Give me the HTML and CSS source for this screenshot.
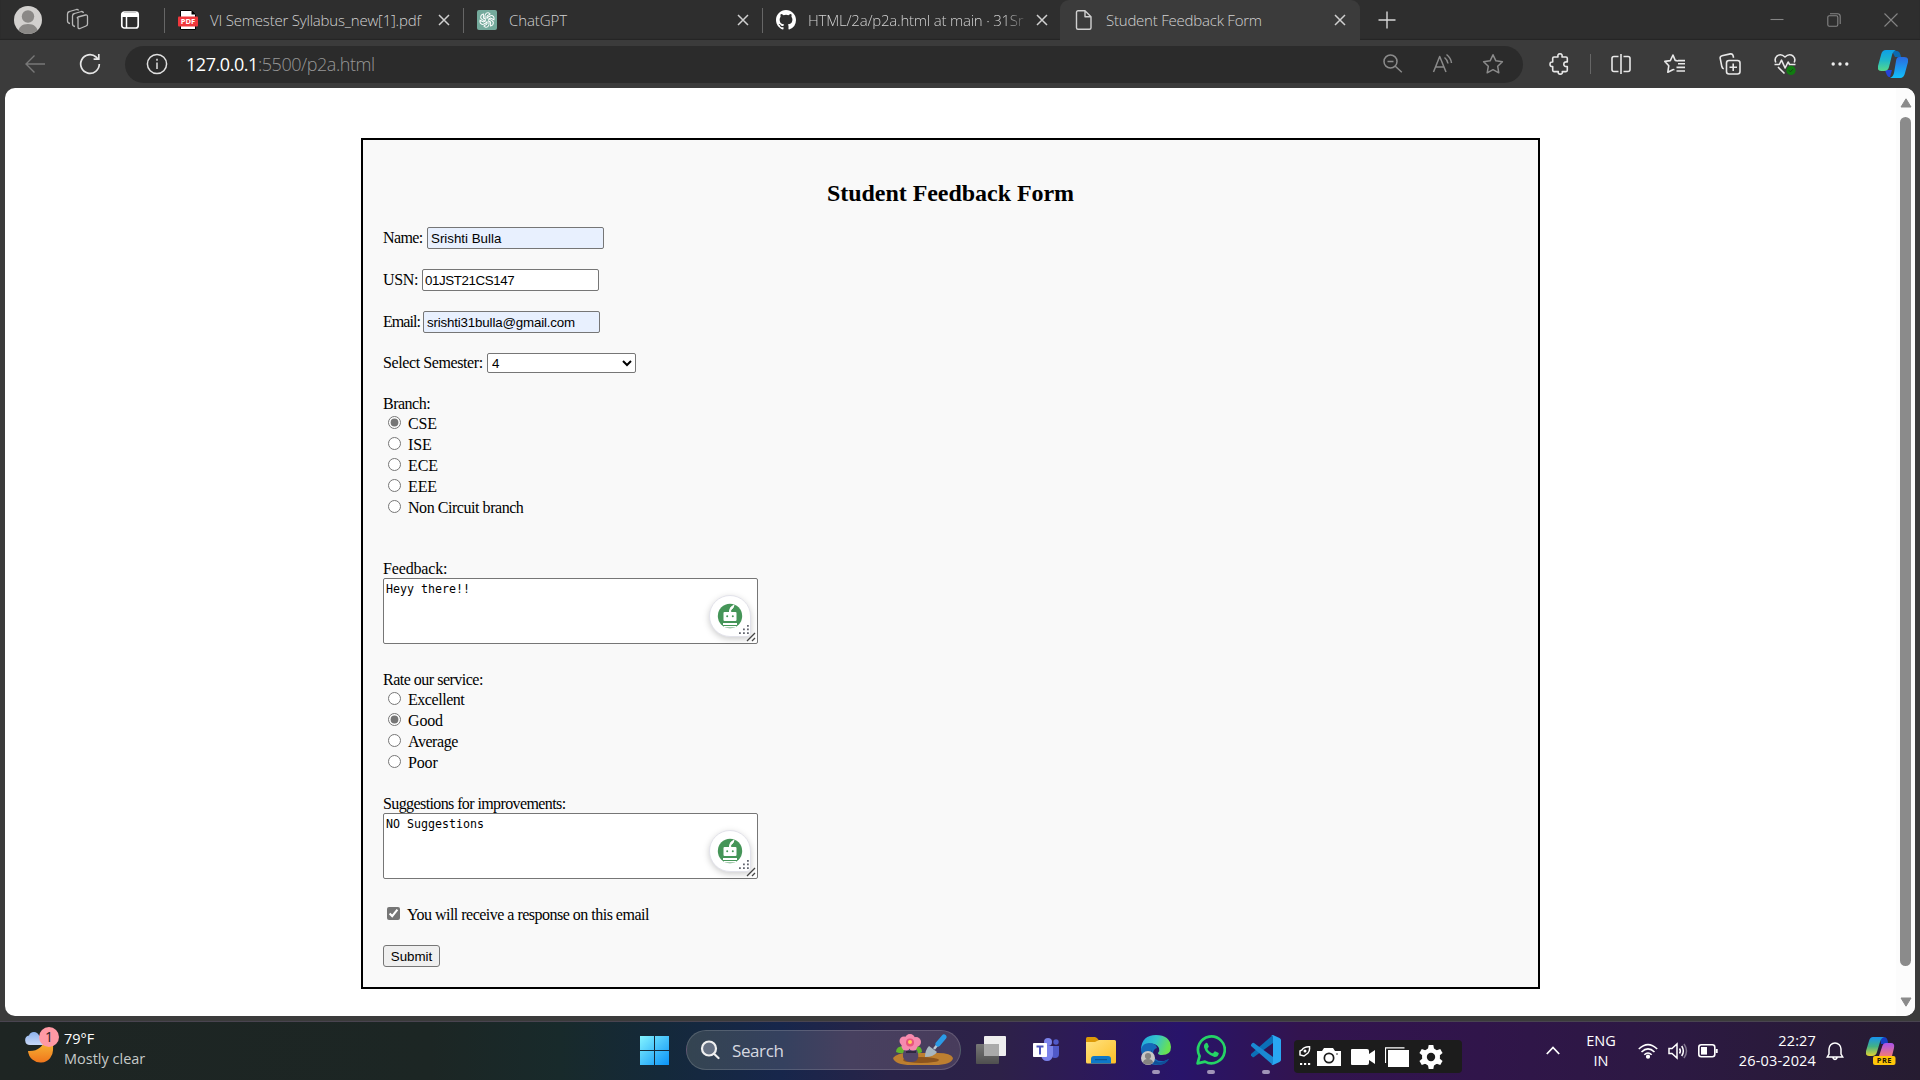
FILE: index.html
```html
<!DOCTYPE html>
<html lang="en">
<head>
<meta charset="utf-8">
<title>Student Feedback Form</title>
<link rel="stylesheet" href="styles.css">
</head>
<body>
<header class="tabbar">
  <div class="tab-tools">
    <svg class="avatar" width="28" height="28" viewBox="0 0 28 28"><defs><clipPath id="av"><circle cx="14" cy="14" r="14"/></clipPath></defs><g clip-path="url(#av)"><rect width="28" height="28" fill="#d2d0ce"/><circle cx="14" cy="10.500" r="6.200" fill="#8a8886"/><path d="M4 28c0-7 4-10 10-10s10 3 10 10z" fill="#8a8886"/></g></svg>
    <svg class="workspaces" width="24" height="24" viewBox="0 0 24 24" fill="none" stroke="#b8b8b8" stroke-width="1.300" stroke-linejoin="round"><path d="M12 9l7.500-2q2-.4 2 1.500v7.500q0 1.500-1.500 2l-6 2.500q-2 .5-2-1.500V10.500Q10.500 9.500 12 9z"/><path d="M9 18.500q-2.500-.5-2.500-2.500V8q0-2 2-2.500l7-2Q17 3.300 17.500 5"/><path d="M4 15.500q-2.500-.5-2.500-2.500V6q0-2 2-2.500l7-2Q12 1.300 12.500 2.500"/></svg>
    <svg class="vertical" width="20" height="20" viewBox="0 0 20 20"><rect x="1.800" y="2" width="16.400" height="16" rx="2.500" fill="none" stroke="#fff" stroke-width="1.700"/><path d="M2 3h16v4H2z" fill="#fff"/><path d="M6.500 6v12" stroke="#fff" stroke-width="1.500"/></svg>
  </div>
  <div class="tab tab-pdf">
    <svg class="favicon" width="20" height="20" viewBox="0 0 20 20"><path d="M2.500.5h11l4 4v15h-15z" fill="#fff" stroke="#000"/><path d="M13.500.5v4h4z" fill="#000"/><rect y="6.500" width="20" height="10" rx="1" fill="#f0373c"/><text x="10" y="14.200" text-anchor="middle" class="pdf-label">PDF</text></svg>
    <span class="tab-title w-pdf">VI Semester Syllabus_new[1].pdf</span>
    <svg class="close" width="12" height="12" viewBox="0 0 12 12"><path d="M1 1l10 10M11 1L1 11"/></svg>
  </div>
  <div class="tab tab-gpt">
    <svg class="favicon" width="20" height="20" viewBox="0 0 20 20"><rect width="20" height="20" rx="2" fill="#74aa9c"/><g fill="none" stroke="#fff" stroke-width="1"><g id="petal"><path d="M8 8.900V5.400Q8.200 3 10.600 2.700q1.500 0 2.700 1.200L10 5.900v3"/></g><use href="#petal" transform="rotate(60 10 10)"/><use href="#petal" transform="rotate(120 10 10)"/><use href="#petal" transform="rotate(180 10 10)"/><use href="#petal" transform="rotate(240 10 10)"/><use href="#petal" transform="rotate(300 10 10)"/></g></svg>
    <span class="tab-title w-gpt">ChatGPT</span>
    <svg class="close" width="12" height="12" viewBox="0 0 12 12"><path d="M1 1l10 10M11 1L1 11"/></svg>
  </div>
  <div class="tab tab-git">
    <svg class="favicon" width="20" height="20" viewBox="0 0 16 16"><path fill="#fff" d="M8 0C3.580 0 0 3.580 0 8c0 3.540 2.290 6.530 5.470 7.590.4.070.55-.17.55-.38 0-.19-.01-.82-.01-1.490-2.010.37-2.530-.49-2.690-.94-.09-.23-.48-.94-.82-1.130-.28-.15-.68-.52-.01-.53.63-.01 1.080.58 1.230.82.72 1.210 1.870.87 2.330.66.07-.52.28-.87.51-1.070-1.780-.2-3.640-.89-3.640-3.950 0-.87.31-1.590.82-2.150-.08-.2-.36-1.020.08-2.120 0 0 .67-.21 2.200.82a7.600 7.600 0 0 1 4 0c1.530-1.040 2.200-.82 2.200-.82.44 1.100.16 1.920.08 2.120.51.56.82 1.270.82 2.150 0 3.070-1.870 3.750-3.650 3.950.29.25.54.73.54 1.480 0 1.070-.01 1.930-.01 2.200 0 .21.15.46.55.38A8 8 0 0 0 16 8c0-4.420-3.580-8-8-8z"/></svg>
    <span class="tab-title w-git">HTML/2a/p2a.html at main · 31Sr</span>
    <svg class="close" width="12" height="12" viewBox="0 0 12 12"><path d="M1 1l10 10M11 1L1 11"/></svg>
  </div>
  <div class="tab tab-active">
    <svg class="favicon" width="20" height="20" viewBox="0 0 20 20" fill="none" stroke="#d0d0d0" stroke-width="1.400" stroke-linejoin="round"><path d="M4 .8h7l6 6v11a1.500 1.500 0 0 1-1.500 1.500H4A1.500 1.500 0 0 1 2.500 17.800V2.300A1.500 1.500 0 0 1 4 .8zM11 .8v6h6"/></svg>
    <span class="tab-title w-form">Student Feedback Form</span>
    <svg class="close" width="12" height="12" viewBox="0 0 12 12"><path d="M1 1l10 10M11 1L1 11"/></svg>
  </div>
  <svg class="newtab" width="18" height="18" viewBox="0 0 18 18"><path d="M9 0.500v17M.5 9h17"/></svg>
  <div class="window-controls">
    <svg width="14" height="14" viewBox="0 0 14 14"><path d="M.5 6.500h13"/></svg>
    <svg width="14" height="14" viewBox="0 0 14 14"><rect x=".8" y="2.800" width="10" height="10.500" rx="1.500"/><path d="M3 .8h7.500q2.700 0 2.700 2.700V11"/></svg>
    <svg width="14" height="14" viewBox="0 0 14 14"><path d="M.5.5l13 13M13.500.5l-13 13"/></svg>
  </div>
</header>

<nav class="toolbar">
  <svg class="back" width="22" height="20" viewBox="0 0 22 20" fill="none" stroke="#787878" stroke-width="1.400"><path d="M21 10H2M10.500 1.500L2 10l8.500 8.500"/></svg>
  <svg class="reload" width="22" height="22" viewBox="0 0 22 22" fill="none" stroke="#e6e6e6" stroke-width="1.700"><path d="M20.300 11a9.300 9.300 0 1 1-3.200-7l2 2M19.800 1v5.200h-5.200"/></svg>
  <div class="address">
    <svg width="22" height="22" viewBox="0 0 22 22" fill="none" stroke="#e0e0e0" stroke-width="1.500"><circle cx="11" cy="11" r="9.600"/><path d="M11 9.500v6.500M11 5.800v2"/></svg>
    <span class="url"><b>127.0.0.1</b>:5500/p2a.html</span>
    <div class="address-icons">
      <svg width="22" height="22" viewBox="0 0 22 22"><circle cx="8.500" cy="8.500" r="6.500"/><path d="M13.300 13.300l6.500 6M5.500 8.500h6"/></svg>
      <svg width="22" height="22" viewBox="0 0 22 22"><path d="M1.500 19L7.700 3.500 14 19M3.700 14h8.200M12.500 4.500q3 2.300 3.500 6M14.500 1.500q4.500 3.500 5 8.500"/></svg>
      <svg width="22" height="22" viewBox="0 0 22 22"><path d="M11 1.800l2.900 6 6.500.9-4.700 4.600 1.100 6.500L11 16.700l-5.800 3.100 1.100-6.500L1.600 8.700l6.500-.9z"/></svg>
    </div>
  </div>
  <div class="actions">
    <svg width="22" height="22" viewBox="0 0 22 22"><path d="M5 4h4q-.7-3.200 2-3.200T13 4h4q1.300 0 1.300 1.300V9q-3.500-.6-3.500 2.200T18.300 13.500v3.800q0 1.300-1.300 1.300h-3.700q.5 2.500-2 2.500t-2-2.500H5q-1.300 0-1.300-1.300V13.500q-2.700.3-2.700-2.300T3.700 9V5.300Q3.700 4 5 4z"/></svg>
    <i class="action-divider"></i>
    <svg width="22" height="22" viewBox="0 0 22 22"><path d="M11 1v20M8.500 3.500H4q-2 0-2 2v11q0 2 2 2h4.500M13.500 3.500H18q2 0 2 2v11q0 2-2 2h-4.500"/></svg>
    <svg width="22" height="22" viewBox="0 0 22 22"><path d="M14 8l-2.800-.6L9 2 6.300 7.600l-5.500.8 4 4.300-1 6.500 5-2.400q1.200-.5 1.200.4M14 10.800h7M12.500 14.400H21M12.500 18H21M14 7.600h7"/></svg>
    <svg width="22" height="22" viewBox="0 0 22 22"><rect x="7.500" y="7.500" width="13.500" height="13.500" rx="2.500"/><path d="M14.200 10.500v7.500M10.500 14.200H18M4.800 15.800q-1.500-.3-1.900-2L1.200 5.300Q.8 3.200 3 2.700l8.300-1.800q2-.4 2.700 1.500l.6 2.300"/></svg>
    <svg width="22" height="22" viewBox="0 0 22 22"><path d="M1.800 9.500Q0 5.500 3 3q4-3 8 1 4-4 8-1 3 2.500 1.200 6.500M.5 11.500h4.800l2.200-4.300 3.600 7.800 3-6 1.500 2.500H21.500M4 14l6.500 6.500"/><circle cx="17" cy="17.400" r="4.600" fill="#107c10" stroke="none"/><path d="M15 17.400l1.400 1.400 2.600-2.600" stroke="#173d17" stroke-width="1"/></svg>
    <svg width="22" height="22" viewBox="0 0 22 22"><g fill="#eee" stroke="none"><circle cx="4.200" cy="11" r="1.700"/><circle cx="11" cy="11" r="1.700"/><circle cx="17.800" cy="11" r="1.700"/></g></svg>
  </div>
  <svg class="copilot" width="30" height="28" viewBox="0 0 30 28"><defs><linearGradient id="cp1" x2="0" y2="1"><stop stop-color="#0da0e8"/><stop offset=".5" stop-color="#20b8c8"/><stop offset="1" stop-color="#56d98a"/></linearGradient><linearGradient id="cp2" x2="0" y2="1"><stop stop-color="#2a6ae0"/><stop offset="1" stop-color="#12c0fa"/></linearGradient></defs><path d="M14 1h5q3 0 4 6h-6z" fill="#0b6ab0"/><path d="M7 20h7l-2 7H11q-2 0-4-7z" fill="#2545d8"/><path d="M8 0h10q-3 1-4 5l-3 12q-1 4-5 4H3q-4 0-3-5L3 5q1-5 5-5z" fill="url(#cp1)"/><path d="M21 7h5q5 0 4 5l-3 11q-1 5-5 5H12q3-1 4-5l2-12q.5-4 3-4z" fill="url(#cp2)"/></svg>
</nav>

<main class="viewport">
  <div class="page">
    <form class="feedback">
      <h2>Student Feedback Form</h2>
      <label class="row"><span class="label name">Name:</span><input class="field filled" type="text" value="Srishti Bulla"></label>
      <label class="row"><span class="label usn">USN:</span><input class="field usn-field" type="text" value="01JST21CS147"></label>
      <label class="row"><span class="label email">Email:</span><input class="field filled email-field" type="text" value="srishti31bulla@gmail.com"></label>
      <label class="row semester"><span class="label sem">Select Semester:</span><select class="select"><option>4</option></select></label>
      <div class="group branch">
        <span class="caption">Branch:</span>
        <label class="choice code"><input type="radio" name="branch" checked>CSE</label>
        <label class="choice code"><input type="radio" name="branch">ISE</label>
        <label class="choice code"><input type="radio" name="branch">ECE</label>
        <label class="choice code"><input type="radio" name="branch">EEE</label>
        <label class="choice"><input type="radio" name="branch">Non Circuit branch</label>
      </div>
      <div class="group comments">
        <span class="caption wide">Feedback:</span>
        <div class="area"><textarea spellcheck="false">Heyy there!!</textarea>
          <svg class="helper" width="50" height="50" viewBox="0 0 50 50"><defs><g id="bot"><path d="M25 4.500A20.500 20.500 0 1 0 25 45.500H42q3.500 0 3.500-3.500V25A20.500 20.500 0 0 0 25 4.500z" fill="#fff" stroke="#e2e2ea"/><circle cx="25" cy="25" r="12.200" fill="#459558"/><path d="M24.500 20q0-4 4.500-6-.5 3.500-3.300 5V21h-1.200z" fill="#fff" stroke="#fff"/><rect x="18.500" y="21" width="13" height="9" rx="1" fill="#fff"/><circle cx="22.200" cy="25.300" r="1" fill="#459558"/><circle cx="27.800" cy="25.300" r="1" fill="#459558"/><path d="M18 32h14v2H18zM19 35h12v1.500H19z" fill="#fff"/><g fill="#62656f"><path d="M42 34h1.800v1.800H42zM38 37.500h1.800v1.800H38zM42 37.500h1.800v1.800H42zM34 41.300h1.800v1.800H34zM38 41.300h1.800v1.800H38zM42 41.300h1.800v1.800H42z"/></g></g></defs><use href="#bot"/></svg>
          <svg class="grip" width="10" height="10" viewBox="0 0 10 10"><path d="M1 9L9 1M6 9L9 6"/></svg>
        </div>
      </div>
      <div class="group rating">
        <span class="caption">Rate our service:</span>
        <label class="choice"><input type="radio" name="rate">Excellent</label>
        <label class="choice wide"><input type="radio" name="rate" checked>Good</label>
        <label class="choice"><input type="radio" name="rate">Average</label>
        <label class="choice wide"><input type="radio" name="rate">Poor</label>
      </div>
      <div class="group suggestions">
        <span class="caption">Suggestions for improvements:</span>
        <div class="area"><textarea spellcheck="false">NO Suggestions</textarea>
          <svg class="helper" width="50" height="50" viewBox="0 0 50 50"><use href="#bot"/></svg>
          <svg class="grip" width="10" height="10" viewBox="0 0 10 10"><path d="M1 9L9 1M6 9L9 6"/></svg>
        </div>
      </div>
      <label class="choice consent"><input type="checkbox" checked>You will receive a response on this email</label>
      <button class="submit" type="button">Submit</button>
    </form>
  </div>
  <div class="scrollbar">
    <svg width="12" height="10" viewBox="0 0 12 10"><path d="M6 .8L11 9H1z" fill="#8b8b8b" stroke="#8b8b8b" stroke-linejoin="round"/></svg>
    <i class="thumb"></i>
    <svg width="12" height="10" viewBox="0 0 12 10"><path d="M6 9.200L11 1H1z" fill="#8b8b8b" stroke="#8b8b8b" stroke-linejoin="round"/></svg>
  </div>
</main>

<footer class="taskbar">
  <div class="weather">
    <svg width="36" height="36" viewBox="0 0 36 36"><defs><linearGradient id="moon" x2="0" y2="1"><stop stop-color="#f7c63c"/><stop offset="1" stop-color="#f0761c"/></linearGradient><linearGradient id="cloud" x2="0" y2="1"><stop stop-color="#8db2ec"/><stop offset="1" stop-color="#c9d9f7"/></linearGradient></defs><path d="M21 10q8 3 7 12a12.500 12.500 0 0 1-25 2q14 1 18-14z" fill="url(#moon)"/><path d="M5 18a4.800 4.800 0 0 1-1-9.500Q5 5 9 5q3.500 0 5 3.500 4 1 4 9.500z" fill="url(#cloud)"/><circle cx="24" cy="10" r="10" fill="#ff99a4"/><text x="24" y="15.300" text-anchor="middle" class="badge-text">1</text></svg>
    <div class="weather-text"><span>79°F</span><small>Mostly clear</small></div>
  </div>
  <div class="apps">
    <svg width="29" height="29" viewBox="0 0 29 29"><defs><linearGradient id="win" gradientUnits="userSpaceOnUse" x1="0" y1="0" x2="29" y2="29"><stop stop-color="#83f4ff"/><stop offset=".55" stop-color="#40bdfa"/><stop offset="1" stop-color="#0a93f7"/></linearGradient></defs><path d="M0 0h14v14H0zM15 0h14v14H15zM0 15h14v14H0zM15 15h14v14H15z" fill="url(#win)"/></svg>
    <div class="search">
      <svg width="20" height="20" viewBox="0 0 20 20" fill="none" stroke="#f0f0f0" stroke-width="2.200" stroke-linecap="round"><circle cx="9" cy="8.500" r="7" fill="#667183"/><path d="M14 13.700l4.500 4.300"/></svg>
      <span>Search</span>
      <svg class="flower" width="60" height="32" viewBox="0 0 60 32"><path d="M0 24q4-5 15-5h30q13 0 15 5-1 7-19 7H18Q2 31 0 24z" fill="#bd7f30"/><ellipse cx="28" cy="26" rx="18" ry="3" fill="#8b541e"/><path d="M11 12q-8 0-8 6 7 3 11-1zM23 12q6 0 6 6-5 3-8-1z" fill="#62b52d"/><path d="M11 16h13q3 8-1 11-5 2-10 0-5-3-2-11z" fill="#514568"/><path d="M13 17h10v2H13z" fill="#2e2840"/><g fill="#f68aae"><circle cx="17" cy="5" r="5"/><circle cx="23" cy="8" r="5"/><circle cx="20" cy="12" r="4.500"/><circle cx="13" cy="12" r="4.500"/><circle cx="11" cy="7" r="4.500"/></g><circle cx="17" cy="8.500" r="4" fill="#e8547e"/><circle cx="17" cy="8" r="2" fill="#ffcb58"/><path d="M50 4l-9 11" stroke="#b9cad6" stroke-width="2.500"/><path d="M36 12l8 6q-3 5-12 5 0-7 4-11z" fill="#a8b7c0"/><path d="M51 3l-6 7" stroke="#2b9be6" stroke-width="5" stroke-linecap="round"/></svg>
    </div>
    <svg width="30" height="28" viewBox="0 0 30 28"><defs><linearGradient id="tv" x2="0" y2="1"><stop stop-color="#777"/><stop offset="1" stop-color="#4f4f4f"/></linearGradient></defs><rect x="8" width="22" height="20" rx="1" fill="#eee"/><rect y="8" width="23" height="20" rx="1" fill="url(#tv)"/><path d="M8 8h15v12H8z" fill="#aaa"/></svg>
    <svg class="teams" width="28" height="26" viewBox="0 0 28 26"><circle cx="23" cy="5" r="2.700" fill="#5059c9"/><circle cx="15" cy="5" r="4" fill="#7b83eb"/><path d="M18 9h8v8q0 4-4 4t-4-4z" fill="#5059c9"/><path d="M8 9h12v9q-1 6-6 6t-6-6z" fill="#7b83eb"/><rect y="6" width="14" height="14" rx=".8" fill="#fff"/><path d="M3.500 9.500h7M7 9.500v8" stroke="#4b53bc" stroke-width="2"/></svg>
    <svg width="30" height="27" viewBox="0 0 30 27"><defs><linearGradient id="fold" x2="1" y2="1"><stop stop-color="#ffe281"/><stop offset="1" stop-color="#fdbf25"/></linearGradient></defs><path d="M0 1.500Q0 0 1.500 0H9q2 0 4 3.500L9 8H0z" fill="#dd9a08"/><path d="M0 5h9L13 3h15.500Q30 3 30 4.500V25q0 1.500-1.500 1.500h-27Q0 26.500 0 25z" fill="url(#fold)"/><path d="M5 26.500V22q0-3 3-3h14q3 0 3 3v4.500z" fill="#0e78c8"/><path d="M9 22.700h12" stroke="#0b4f8c"/></svg>
    <div class="app running"><svg width="30" height="30" viewBox="0 0 30 30"><defs><linearGradient id="ed" x2="1" y2=".3"><stop stop-color="#1ba3e2"/><stop offset=".55" stop-color="#36c5c9"/><stop offset="1" stop-color="#68e152"/></linearGradient></defs><path d="M0 14Q1 0 15 0t15 12q0 8-9 8-4 0-4-2 2-2 1-5-3-5-9-4-7 1-9 8z" fill="url(#ed)"/><path d="M0 14q2-6 8-6 7 0 8 5-4 1-4 6 1 8 11 7l5-2q-5 7-13 6Q1 29 0 14z" fill="#1569b8"/><path d="M11 15q-2 9 6 12 5 1 11-3-2 5-10 6-9-1-10-8 0-5 3-7z" fill="#104f97"/><circle cx="7" cy="23" r="7" fill="#c9c7c5"/><circle cx="7" cy="21" r="3.100" fill="#858381"/><path d="M2 28q0-4 5-4t5 4q-5 3.500-10 0z" fill="#858381"/></svg></div>
    <div class="app running"><svg width="30" height="30" viewBox="0 0 30 30"><path d="M1.600 28.400l2-7.200A13.400 13.400 0 1 1 9 26.600z" fill="none" stroke="#25d366" stroke-width="2.700" stroke-linejoin="round"/><path d="M10.500 7.800q-3 1.200-2.500 4.500Q10 19.500 18.500 22q3.500.2 4.300-3.500 0-.8-3.800-2.300-.6 0-1.900 2-.8.500-3.100-1.200-2-1.600-2.600-3.100 0-.5 1.400-2.200 0-.5-1.300-3.400-.4-.7-1-.5z" fill="#25d366"/></svg></div>
    <div class="app running"><svg width="30" height="30" viewBox="0 0 30 30"><path d="M22 8L3 22q-1 .5-1.500 0L0 20.500q-.5-1 0-1.500L22 0z" fill="#0b70b8"/><path d="M22 22L3 8q-1-.5-1.500 0L0 9.500q-.5 1 0 1.500L22 30z" fill="#1a8ad2"/><path d="M22 0l6.500 3Q30 4 30 5v20q0 1-1.500 2L22 30q-1 0-2-1 2 1 2-1V2q0-2-2-1 1-1 2-1z" fill="#29a7f2"/></svg></div>
    <div class="recorder">
      <svg width="12" height="22" viewBox="0 0 12 22"><path d="M10.500.8Q5 .5 3 4L1 5v4l4 1 4-3q2-2 1.500-6z" fill="#1c1c1c" stroke="#fff" stroke-width="1.500"/><circle cx="6" cy="5" r="1.500" fill="#fff"/><path d="M1 17h2.200v2H1zM5 17h2.200v2H5zM9 17h2.200v2H9z" fill="#fff"/></svg>
      <svg width="24" height="20" viewBox="0 0 24 20"><path d="M0 4h5l2-3h9l2 3h6v15H0z" fill="#fff"/><circle cx="12" cy="11" r="5.500" fill="#1c1c1c"/><circle cx="12" cy="11" r="3.800" fill="#fff"/><circle cx="20" cy="7" r=".8" fill="#1c1c1c"/></svg>
      <svg width="24" height="20" viewBox="0 0 24 20"><path d="M1 2h15q2 0 2 2v3l6-4v14l-6-4v3q0 2-2 2H1q-1 0-1-1V3q0-1 1-1z" fill="#fff"/></svg>
      <svg width="24" height="20" viewBox="0 0 24 20"><path d="M.5 16V.8h19" fill="none" stroke="#fff" stroke-width="1.200"/><path d="M3 3h21v17H3z" fill="#fff"/></svg>
      <svg width="24" height="24" viewBox="0 0 24 24"><g fill="#fff"><circle cx="12" cy="12" r="9"/><path id="tooth" d="M9.700 0h4.600l1 5H8.700z"/><use href="#tooth" transform="rotate(60 12 12)"/><use href="#tooth" transform="rotate(120 12 12)"/><use href="#tooth" transform="rotate(180 12 12)"/><use href="#tooth" transform="rotate(240 12 12)"/><use href="#tooth" transform="rotate(300 12 12)"/></g><circle cx="12" cy="12" r="4.200" fill="#1c1c1c"/></svg>
    </div>
  </div>
  <div class="tray">
    <svg class="chevron" width="14" height="9" viewBox="0 0 14 9"><path d="M.8 8L7 1.500 13.200 8" stroke-width="1.800"/></svg>
    <div class="lang"><span>ENG</span><span>IN</span></div>
    <svg class="wifi" width="20" height="16" viewBox="0 0 20 16" stroke-width="1.600"><path d="M.8 6q9.200-8.800 18.400 0M3.500 9q6.500-6.300 13 0M6.300 11.800q3.700-3.600 7.400 0"/><circle cx="10" cy="13.700" r="1.300" fill="#fff"/></svg>
    <svg class="sound" width="20" height="18" viewBox="0 0 20 18" stroke-width="1.500"><path d="M1 6.500h3l5-4.500v14l-5-4.500H1zM11.500 6.500q1.700 2.500 0 5M13.700 4q3.300 5 0 10"/><path d="M16 2q5 7 0 14" opacity=".4"/></svg>
    <svg class="battery" width="20" height="14" viewBox="0 0 20 14" stroke-width="1.600"><rect x=".8" y=".8" width="16" height="12" rx="2.500"/><path d="M3 3h6v7.600H3z" fill="#fff" stroke="none"/><path d="M18.700 5v4" stroke-width="2"/></svg>
    <div class="clock"><span>22:27</span><span>26-03-2024</span></div>
    <svg class="bell" width="18" height="20" viewBox="0 0 18 20" stroke-width="1.500"><path d="M3 13V8a6 6 0 0 1 12 0v5l1.700 3H1.300zM6.800 16.500q2.200 3.800 4.400 0"/></svg>
    <svg class="copilot-pre" width="30" height="28" viewBox="0 0 30 28"><defs><linearGradient id="pr1" x2="0" y2="1"><stop stop-color="#1793ee"/><stop offset=".5" stop-color="#43b184"/><stop offset="1" stop-color="#e3d332"/></linearGradient><linearGradient id="pr2" x2="0" y2="1"><stop stop-color="#a952ed"/><stop offset="1" stop-color="#f27a78"/></linearGradient></defs><path d="M14 0h4q4 0 4 7h-7z" fill="#173fc4"/><path d="M7 0h11q-3 1-4 5l-3 10q-1 4-5 4H3q-4 0-3-5L3 4q1-4 4-4z" fill="url(#pr1)" stroke="none"/><path d="M20 6h5q4 0 3 5l-2 8H13l3-9q1-4 4-4z" fill="url(#pr2)" stroke="none"/><rect x="7" y="19" width="22.500" height="9" rx="2" fill="#ffc60a" stroke="none"/><text x="18.300" y="26.300" text-anchor="middle" class="pre-label">PRE</text></svg>
  </div>
</footer>
</body>
</html>
```
FILE: styles.css
```css
* { box-sizing: border-box; }
body {
  margin: 0;
  width: 1920px;
  height: 1080px;
  overflow: hidden;
  display: flex;
  flex-direction: column;
  background: #3b3b3b;
  font-family: "Open Sans", "Noto Sans", sans-serif;
}
svg { display: block; flex: none; }

/* Tabs */
.tabbar {
  flex: none;
  height: 40px;
  display: flex;
  align-items: center;
  background: #2e2e2e;
  box-shadow: inset 0 -1px 1px #252525;
}
.tab-tools { width: 164px; height: 40px; display: flex; align-items: center; padding-left: 14px; }
.workspaces { margin-left: 24px; }
.vertical { margin-left: 30px; }
.tab { height: 40px; display: flex; align-items: center; color: #d2d2d2; }
.tab-pdf::before, .tab-gpt::before, .tab-git::before {
  content: "";
  width: 1px;
  height: 25px;
  background: #666;
  margin-right: 13px;
}
.tab-pdf { width: 299px; }
.tab-gpt { width: 299px; }
.tab-git { width: 298px; }
.tab-title {
  margin-left: 12px;
  font-size: 15px;
  font-weight: 300;
  white-space: nowrap;
  line-height: 22px;
  padding-bottom: 1px;
}
.w-pdf { width: 218px; letter-spacing: -.2px; }
.w-gpt { width: 218px; letter-spacing: -.1px; }
.w-git {
  width: 218px;
  letter-spacing: -.22px;
  -webkit-mask-image: linear-gradient(90deg, #000 90%, rgba(0, 0, 0, .15));
  mask-image: linear-gradient(90deg, #000 90%, rgba(0, 0, 0, .15));
}
.close { margin-left: 10px; fill: none; stroke: #d0d0d0; stroke-width: 1.5; }
.tab-active {
  width: 300px;
  padding-left: 14px;
  background: #3b3b3b;
  border-radius: 9px 9px 0 0;
}
.tab-active .tab-title { width: 218px; letter-spacing: -.22px; }
.newtab { margin-left: 18px; fill: none; stroke: #d8d8d8; stroke-width: 1.4; }
.window-controls { margin-left: auto; margin-right: 22px; display: flex; gap: 43px; }
.window-controls svg { fill: none; stroke: #858585; stroke-width: 1.1; }
.pdf-label { font: bold 7.5px "Open Sans", sans-serif; fill: #fff; }

/* Address bar row */
.toolbar { flex: none; height: 48px; display: flex; align-items: center; }
.back { margin-left: 24px; }
.reload { margin-left: 33px; }
.address {
  width: 1398px;
  height: 37px;
  margin-left: 24px;
  padding: 0 19px 0 21px;
  display: flex;
  align-items: center;
  border-radius: 19px;
  background: #2b2b2b;
}
.url { margin-left: 18px; padding-bottom: 1px; font-size: 18px; font-weight: 300; color: #989898; letter-spacing: -.45px; }
.url b { font-weight: 400; color: #fff; }
.address-icons { margin-left: auto; display: flex; gap: 28px; }
.address-icons svg { fill: none; stroke: #8b8b8b; stroke-width: 1.5; stroke-linejoin: round; }
.actions { width: 302px; margin-left: 26px; display: flex; align-items: center; justify-content: space-between; }
.actions svg { fill: none; stroke: #e8e8e8; stroke-width: 1.6; stroke-linejoin: round; }
.action-divider { width: 1px; height: 20px; background: #666; margin: 0 -14px; }
.copilot { margin-left: 27px; }

/* Page area */
.viewport {
  flex: none;
  height: 928px;
  margin: 0 5px;
  display: flex;
  background: #fff;
  border-radius: 10px;
  overflow: hidden;
}
.page { flex: 1; padding: 50px 0 0 356px; }
.scrollbar {
  width: 19px;
  padding: 10px 0 8px;
  display: flex;
  flex-direction: column;
  align-items: center;
  background: #fcfcfc;
}
.thumb { width: 11px; height: 849px; margin: 9px 0 31px; border-radius: 6px; background: #8b8b8b; }

.feedback {
  width: 1179px;
  height: 851px;
  padding: 20px;
  border: 2px solid #000;
  background: #f9f9f9;
  display: flex;
  flex-direction: column;
  align-items: flex-start;
  font: 16px "Liberation Serif", serif;
  color: #000;
}
.feedback h2 {
  align-self: center;
  margin: 20px 0;
  font-size: 24px;
  line-height: 27px;
  letter-spacing: -.04px;
}
.row { display: flex; align-items: center; height: 22px; margin-bottom: 20px; }
.label { white-space: nowrap; }
.name { width: 44px; letter-spacing: -.6px; }
.usn { width: 39px; letter-spacing: -.3px; }
.email { width: 40px; letter-spacing: -.95px; }
.sem { width: 104px; letter-spacing: -.4px; }
.field {
  width: 177px;
  height: 22px;
  padding: 1px 2px;
  border: 1px solid #767676;
  border-radius: 2px;
  background: #fff;
  font: 13.333px "Liberation Sans", sans-serif;
}
.filled { background: #e8f0fe; padding-left: 3px; }
.usn-field { letter-spacing: -.4px; }
.email-field { letter-spacing: -.17px; }
.semester { height: 20px; }
.select {
  width: 149px;
  height: 20px;
  border: 1px solid #767676;
  border-radius: 2px;
  background: #fff;
  font: 13.333px "Liberation Sans", sans-serif;
}
.group { display: flex; flex-direction: column; letter-spacing: -.5px; }
.caption { height: 20px; line-height: 21px; }
.choice { display: flex; align-items: center; height: 21px; padding-top: 1px; letter-spacing: -.45px; }
.choice input { width: 13px; height: 13px; margin: -4px 7px 0 5px; accent-color: #767676; }
.code { letter-spacing: -.1px; }
.wide { letter-spacing: -.15px; }
.rating { margin-top: 25px; }
.comments { margin-top: 40px; }
.suggestions { margin-top: 20px; }
.suggestions .caption { letter-spacing: -.6px; }
.area { position: relative; width: 375px; height: 66px; }
.area textarea {
  display: block;
  width: 375px;
  height: 66px;
  padding: 2px;
  resize: none;
  border: 1px solid #767676;
  border-radius: 2px;
  font: 11.63px/16px "DejaVu Sans Mono", monospace;
}
.helper { position: absolute; right: 3px; top: 13px; filter: drop-shadow(0 2px 3px rgba(0, 0, 0, .2)); }
.grip { position: absolute; right: 2px; bottom: 2px; fill: none; stroke: #444; stroke-width: 1.3; }
.consent { margin-top: 25px; letter-spacing: -.51px; }
.consent input { margin-left: 4px; }
.submit {
  width: 57px;
  height: 22px;
  margin-top: 20px;
  padding: 0;
  border: 1px solid #767676;
  border-radius: 3px;
  background: #efefef;
  font: 13.333px "Liberation Sans", sans-serif;
}

/* Taskbar */
.taskbar {
  height: 59px;
  margin-top: auto;
  display: flex;
  color: #fff;
  border-top: 1px solid #494450;
  background: linear-gradient(90deg, #1e2523 0, #1c2624 430px, #182a2b 560px, #14293a 660px, #17264b 780px, #292348 890px, #2d2148 1000px, #2d1a58 1080px, #28146a 1180px, #32144f 1300px, #30154a 1480px, #2c1942 1680px, #261c31 1920px);
}
.weather { width: 640px; padding: 5px 0 0 25px; display: flex; }
.weather-text { display: flex; flex-direction: column; margin-left: 3px; font-size: 14.5px; line-height: 20px; padding-top: 2px; }
.weather-text small { font-size: 14.5px; color: #c6cac9; }
.badge-text { font: 14px "Open Sans", sans-serif; fill: #282020; }
.apps { width: 822px; height: 56px; display: flex; align-items: center; }
.search {
  width: 275px;
  height: 40px;
  margin: 0 15px 0 17px;
  padding: 0 7px 0 13px;
  display: flex;
  align-items: center;
  border: 1px solid rgba(255, 255, 255, .15);
  border-radius: 20px;
  background: linear-gradient(90deg, #344451, #35415f 35%, #47405f 60%, #483c5c);
  color: #d7d9e0;
  font-size: 17px;
}
.search span { margin-left: 12px; letter-spacing: -.4px; }
.flower { margin-left: auto; }
.teams { margin-left: 27px; margin-right: 25px; }
.app { position: relative; margin-left: 25px; }
.running::after {
  content: "";
  position: absolute;
  left: 11px;
  bottom: -9px;
  width: 8px;
  height: 4px;
  border-radius: 2px;
  background: #a094b8;
}
.recorder {
  width: 168px;
  height: 33px;
  margin: 13px 0 0 13px;
  padding-left: 5px;
  display: flex;
  align-items: center;
  gap: 10px;
  border-radius: 4px;
  background: #1c1c1c;
}
.recorder svg:nth-child(2) { margin-left: -4px; }
.tray { height: 57px; display: flex; align-items: center; margin-left: 84px; font-size: 14.5px; line-height: 20px; }
.tray svg { fill: none; stroke: #fff; }
.lang { width: 40px; margin-left: 21px; display: flex; flex-direction: column; align-items: center; }
.wifi { margin-left: 17px; }
.sound { margin-left: 10px; }
.battery { margin-left: 10px; }
.clock { width: 92px; margin-left: 6px; display: flex; flex-direction: column; align-items: flex-end; white-space: nowrap; letter-spacing: .15px; }
.bell { margin-left: 10px; }
.tray .copilot-pre { margin-left: 22px; stroke: none; }
.pre-label { font: bold 7.5px "Open Sans", sans-serif; fill: #241800; letter-spacing: .4px; stroke: none; }
```
